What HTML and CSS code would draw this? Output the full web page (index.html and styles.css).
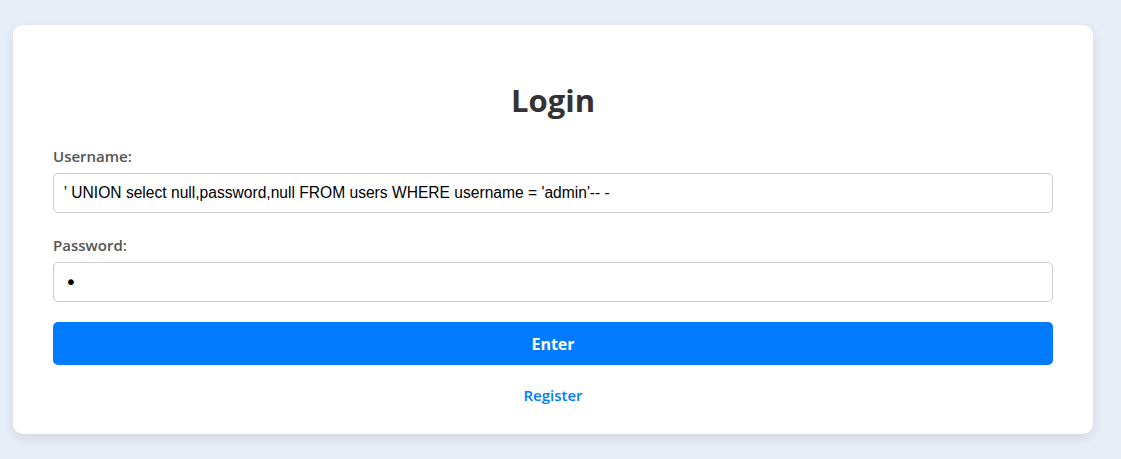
FILE: index.html
```html
<!DOCTYPE html>
<html lang="en">
<head>
<meta charset="utf-8">
<title>Login</title>
<link rel="stylesheet" href="styles.css">
</head>
<body>
<div class="card">
  <h2 class="title">Login</h2>
  <form class="form">
    <div class="group">
      <label class="label" for="username">Username:</label>
      <input class="input" id="username" type="text" value="' UNION select null,password,null FROM users WHERE username = 'admin'-- -">
    </div>
    <div class="group">
      <label class="label" for="password">Password:</label>
      <input class="input input-pass" id="password" type="password" value="a">
    </div>
    <button class="btn" type="button">Enter</button>
  </form>
  <div class="links"><a class="link" href="#">Register</a></div>
</div>
</body>
</html>
```
FILE: styles.css
```css
html, body {
  margin: 0;
  padding: 0;
  background: #e8eef7;
}
body {
  padding: 25px 28px 25px 13px;
  font-family: "Open Sans", "Noto Sans", sans-serif;
}
.card {
  width: 1000px;
  background: #fff;
  border-radius: 10px;
  box-shadow: 0 4px 12px rgba(0, 0, 0, 0.1);
  padding: 55px 40px 29px;
}
.title {
  margin: 0 0 26px;
  text-align: center;
  font-size: 31px;
  line-height: 40px;
  font-weight: 700;
  color: #333;
}
.group {
  margin-bottom: 22px;
}
.group:last-of-type {
  margin-bottom: 20px;
}
.label {
  display: block;
  font-size: 15px;
  line-height: 20px;
  font-weight: 600;
  color: #555;
  margin-bottom: 7px;
}
.input {
  display: block;
  box-sizing: border-box;
  width: 100%;
  height: 40px;
  padding: 0 10px;
  border: 1px solid #ccc;
  border-radius: 5px;
  font-family: "Liberation Sans", sans-serif;
  font-size: 15.6px;
  color: #000;
  background: #fff;
}
.input-pass {
  font-family: "DejaVu Sans", sans-serif;
  font-size: 20px;
  padding-left: 11px;
}
.btn {
  display: block;
  width: 100%;
  height: 43px;
  border: 0;
  border-radius: 5px;
  background: #007bff;
  color: #fff;
  font-family: "Open Sans", "Noto Sans", sans-serif;
  font-size: 16px;
  font-weight: 700;
}
.links {
  text-align: center;
  margin-top: 20px;
  line-height: 20px;
}
.link {
  color: #007bff;
  text-decoration: none;
  font-size: 15px;
  font-weight: 600;
}
```
